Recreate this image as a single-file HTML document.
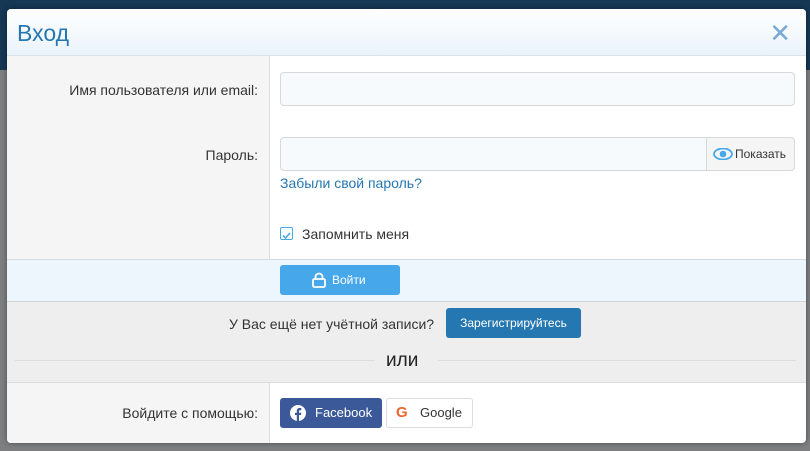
<!DOCTYPE html><html><head><meta charset="utf-8"><style>
body{margin:0;width:810px;height:451px;overflow:hidden;background:#7d7f80;font-family:"Liberation Sans",sans-serif;position:relative}
.topbar{position:absolute;left:0;top:0;width:810px;height:70px;background:#163855}
.m{position:absolute;left:7px;top:9px;width:799px;height:434px;background:#fff;border-radius:4px;overflow:hidden;box-shadow:0 0 6px rgba(0,0,0,.4)}
.hd{height:46px;background:linear-gradient(#fff,#eaf3fb);border-bottom:1px solid #dbe3ea;position:relative}
.hd .t{position:absolute;left:10px;top:11px;font-size:23px;color:#2577b1}
.hd .x{position:absolute;right:15px;top:9px;font-size:26px;color:#7aaad3}
.left{position:absolute;left:0;width:262px;background:#f5f5f5;border-right:1px solid #dfdfdf}
.lab{position:absolute;right:548px;font-size:14px;color:#333;text-align:right;white-space:nowrap}
.inp{position:absolute;left:273px;width:513px;height:32px;border:1px solid #d8d8d8;border-radius:4px;background:#f6fafd}
a{color:#2577b1;text-decoration:none}
</style></head><body>
<div class="topbar"></div>
<div class="m">
<div class="hd"><div class="t">Вход</div><div class="x">✕</div></div>
<div class="left" style="top:47px;height:203px"></div>
<div class="lab" style="top:73px">Имя пользователя или email:</div>
<div class="inp" style="top:63px"></div>
<div class="lab" style="top:138px">Пароль:</div>
<div class="inp" style="top:128px;width:426px;border-radius:4px 0 0 4px"></div>
<div style="position:absolute;left:699px;top:128px;width:87px;height:32px;border:1px solid #d8d8d8;border-radius:0 4px 4px 0;background:#f5f5f5;font-size:12px;color:#333;line-height:32px">
<svg width="20" height="12" viewBox="0 0 20 12" style="position:absolute;left:6px;top:10px"><ellipse cx="10" cy="6" rx="9" ry="5.5" fill="none" stroke="#47a7eb" stroke-width="1.8"/><circle cx="10" cy="6" r="3.3" fill="#47a7eb"/></svg>
<span style="position:absolute;left:28px">Показать</span></div>
<a style="position:absolute;left:273px;top:166px;font-size:14px">Забыли свой пароль?</a>
<div style="position:absolute;left:273px;top:218px;width:11px;height:11px;border:1px solid #47a7eb;border-radius:2px;background:#fff"><svg width="11" height="11"><path d="M2 5.5l2.5 2.5 4.5-5" stroke="#47a7eb" stroke-width="1.6" fill="none"/></svg></div>
<div style="position:absolute;left:295px;top:217px;font-size:14px;color:#333">Запомнить меня</div>
<div style="position:absolute;left:0;top:250px;width:799px;height:41px;background:#edf5fd;border-top:1px solid #d3dbe3;border-bottom:1px solid #cfd4d8"></div>
<div style="position:absolute;left:273px;top:256px;width:120px;height:30px;background:#47a7eb;border-radius:3px;color:#fff;font-size:12px;line-height:30px">
<svg width="14" height="16" viewBox="0 0 14 16" style="position:absolute;left:32px;top:7px"><path d="M3.5 7V5a3.5 3.5 0 0 1 7 0v2" fill="none" stroke="#fff" stroke-width="1.8"/><rect x="1" y="7" width="12" height="8" rx="1.5" fill="none" stroke="#fff" stroke-width="1.8"/></svg>
<span style="position:absolute;left:52px">Войти</span></div>
<div style="position:absolute;left:0;top:293px;width:799px;height:80px;background:#eeeeee;border-bottom:1px solid #dcdcdc"></div>
<div style="position:absolute;left:222px;top:307px;font-size:14px;color:#333">У Вас ещё нет учётной записи?</div>
<div style="position:absolute;left:439px;top:299px;width:135px;height:30px;background:#2577b1;border-radius:3px;color:#fff;font-size:12px;line-height:30px;text-align:center">Зарегистрируйтесь</div>
<div style="position:absolute;left:8px;top:351px;width:360px;border-top:1px solid #dcdcdc"></div>
<div style="position:absolute;left:431px;top:351px;width:358px;border-top:1px solid #dcdcdc"></div>
<div style="position:absolute;left:379px;top:341px;font-size:19px;color:#222">или</div>
<div class="left" style="top:374px;height:60px;background:#f5f5f5"></div>
<div class="lab" style="top:396px">Войдите с помощью:</div>
<div style="position:absolute;left:273px;top:389px;width:102px;height:30px;background:#3b5998;border-radius:3px;color:#fff;font-size:13px;line-height:30px">
<svg width="16" height="16" viewBox="0 0 16 16" style="position:absolute;left:10px;top:7px"><circle cx="8" cy="8" r="8" fill="#fff"/><path d="M9 16V10h2l.3-2.3H9V6.3c0-.7.2-1.1 1.1-1.1h1.2V3.1C11 3 10.3 3 9.6 3 8 3 6.8 4 6.8 5.8v1.9H5V10h1.8v6z" fill="#3b5998"/></svg>
<span style="position:absolute;left:35px">Facebook</span></div>
<div style="position:absolute;left:379px;top:389px;width:85px;height:28px;background:#fff;border:1px solid #ddd;border-radius:3px;color:#333;font-size:13px;line-height:28px">
<span style="position:absolute;left:9px;font-weight:bold;font-size:15px;color:#e8672f">G</span>
<span style="position:absolute;left:33px">Google</span></div>
</div>
</body></html>
